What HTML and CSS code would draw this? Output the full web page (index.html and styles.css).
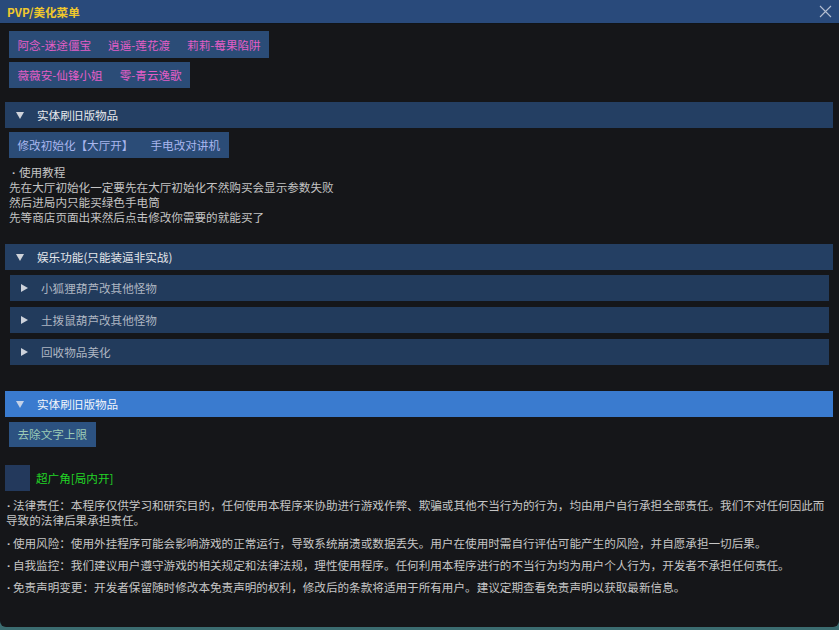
FILE: index.html
```html
<!DOCTYPE html>
<html lang="zh-CN">
<head>
    <meta charset="UTF-8">
    <title>PVP/美化菜单</title>
    <link rel="stylesheet" href="styles.css">
</head>
<body>
    <div class="window">
        <div class="titlebar">
            <span class="title">PVP/美化菜单</span>
            <svg class="close" width="13" height="13" viewBox="0 0 13 13">
                <path d="M1 1 L12 12 M12 1 L1 12" stroke="#b4bfd2" stroke-width="1.1" fill="none"/>
            </svg>
        </div>
        <div class="content">
            <div class="btn-row pink first">
                <button>阿念-迷途僵宝</button>
                <button>逍遥-莲花渡</button>
                <button>莉莉-莓果陷阱</button>
            </div>
            <div class="btn-row pink">
                <button>薇薇安-仙锋小姐</button>
                <button>零-青云逸歌</button>
            </div>

            <div class="header h1">
                <svg class="arrow-down" width="8" height="7" viewBox="0 0 8 7"><polygon points="0,0 8,0 4,7" fill="#cfd3da"/></svg>
                <span>实体刷旧版物品</span>
            </div>
            <div class="btn-row blue">
                <button>修改初始化【大厅开】</button>
                <button>手电改对讲机</button>
            </div>
            <div class="tutorial">
                <div class="bullet">使用教程</div>
                <div>先在大厅初始化一定要先在大厅初始化不然购买会显示参数失败</div>
                <div>然后进局内只能买绿色手电筒</div>
                <div>先等商店页面出来然后点击修改你需要的就能买了</div>
            </div>

            <div class="header h2">
                <svg class="arrow-down" width="8" height="7" viewBox="0 0 8 7"><polygon points="0,0 8,0 4,7" fill="#cfd3da"/></svg>
                <span>娱乐功能(只能装逼非实战)</span>
            </div>
            <div class="node n1">
                <svg class="arrow-right" width="7" height="8" viewBox="0 0 7 8"><polygon points="0,0 7,4 0,8" fill="#cdd2db"/></svg>
                <span>小狐狸葫芦改其他怪物</span>
            </div>
            <div class="node">
                <svg class="arrow-right" width="7" height="8" viewBox="0 0 7 8"><polygon points="0,0 7,4 0,8" fill="#cdd2db"/></svg>
                <span>土拨鼠葫芦改其他怪物</span>
            </div>
            <div class="node">
                <svg class="arrow-right" width="7" height="8" viewBox="0 0 7 8"><polygon points="0,0 7,4 0,8" fill="#cdd2db"/></svg>
                <span>回收物品美化</span>
            </div>

            <div class="header h3 active">
                <svg class="arrow-down" width="8" height="7" viewBox="0 0 8 7"><polygon points="0,0 8,0 4,7" fill="#c4d2e8"/></svg>
                <span>实体刷旧版物品</span>
            </div>
            <div class="btn-row green">
                <button>去除文字上限</button>
            </div>

            <div class="check-row">
                <span class="checkbox"></span>
                <span class="check-label">超广角[局内开]</span>
            </div>

            <div class="notice">
                <p>法律责任：本程序仅供学习和研究目的，任何使用本程序来协助进行游戏作弊、欺骗或其他不当行为的行为，均由用户自行承担全部责任。我们不对任何因此而导致的法律后果承担责任。</p>
                <p>使用风险：使用外挂程序可能会影响游戏的正常运行，导致系统崩溃或数据丢失。用户在使用时需自行评估可能产生的风险，并自愿承担一切后果。</p>
                <p>自我监控：我们建议用户遵守游戏的相关规定和法律法规，理性使用程序。任何利用本程序进行的不当行为均为用户个人行为，开发者不承担任何责任。</p>
                <p>免责声明变更：开发者保留随时修改本免责声明的权利，修改后的条款将适用于所有用户。建议定期查看免责声明以获取最新信息。</p>
            </div>
        </div>
    </div>
</body>
</html>
```

FILE: styles.css
```css
html {
    background-color: #3b6c70;
}
body {
    margin: 0;
    font-family: "Noto Sans CJK SC", "Noto Sans", sans-serif;
    font-size: 11.6px;
}
.window {
    width: 839px;
    height: 627px;
    background-color: #151619;
    border-radius: 0 0 6px 6px;
    overflow: hidden;
}
.titlebar {
    height: 24px;
    background-color: #294a7b;
    border-bottom: 1px solid #101418;
    box-sizing: border-box;
    display: flex;
    align-items: center;
    justify-content: space-between;
    padding: 0 7px 0 7px;
}
.title {
    color: #f0c82c;
    font-weight: bold;
    font-size: 11.6px;
}
.close {
    display: block;
}
.content {
    padding: 0 6px 0 5px;
}
.btn-row {
    display: flex;
    width: max-content;
    margin: 4px 0 0 4px;
    height: 26px;
    background-color: #2b4c77;
}
.btn-row.first {
    margin-top: 7px;
    height: 27px;
}
.btn-row button {
    background: none;
    border: none;
    padding: 0 8.5px;
    font-family: inherit;
    font-size: 11.6px;
    line-height: 26px;
}
.pink button {
    color: #e25ec6;
}
.blue button {
    color: #a9b6ee;
}
.green {
    margin-top: 5px;
    height: 25px;
    background-color: #2c5281;
}
.green button {
    color: #9ccbb6;
    line-height: 25px;
}
.header {
    height: 26px;
    background-color: #243f63;
    display: flex;
    align-items: center;
    padding-left: 11px;
    color: #e6e8ec;
}
.header .arrow-down {
    margin-right: 13px;
}
.header.h1 {
    margin-top: 14px;
}
.header.h2 {
    margin-top: 19px;
}
.header.h3 {
    margin-top: 26px;
}
.header.active {
    background-color: #3a7bcf;
    color: #f2f5fa;
}
.tutorial {
    margin: 7px 0 0 4px;
    line-height: 15px;
    color: #c4c4c4;
}
.tutorial .bullet::before {
    content: "\00B7";
    font-family: "Liberation Sans", sans-serif;
    font-weight: bold;
    padding: 0 3px 0 3px;
}
.node {
    height: 26px;
    margin: 6px 4px 0 5px;
    background-color: #223b5c;
    display: flex;
    align-items: center;
    padding-left: 11px;
    color: #aeb6c2;
}
.node.n1 {
    margin-top: 5px;
}
.node .arrow-right {
    margin-right: 13px;
}
.check-row {
    margin-top: 18px;
    display: flex;
    align-items: center;
}
.checkbox {
    width: 25px;
    height: 26px;
    background-color: #23395c;
    margin-right: 6px;
}
.check-label {
    color: #22d426;
}
.notice {
    margin-top: 7px;
    padding-left: 1px;
    color: #c6c6c6;
}
.notice p {
    margin: 0 0 7px 0;
    line-height: 15px;
}
.notice p::before {
    content: "\00B7";
    font-family: "Liberation Sans", sans-serif;
    font-weight: bold;
    padding: 0 2px 0 1px;
}
.notice p:first-child {
    margin-bottom: 8px;
}
```
